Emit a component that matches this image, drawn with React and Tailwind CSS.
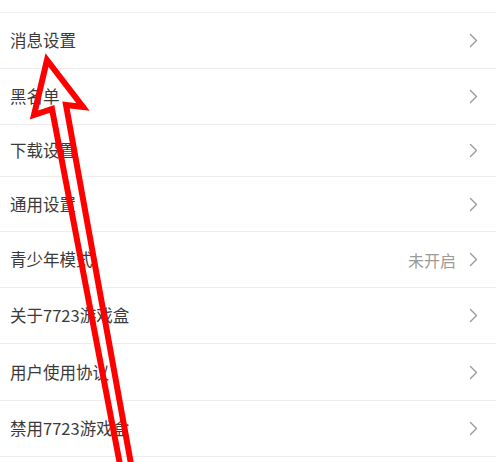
import React from "react";

const rows = [
  { label: "消息设置", h: "h-[56px]" },
  { label: "黑名单", h: "h-[56px]" },
  { label: "下载设置", h: "h-[52px]" },
  { label: "通用设置", h: "h-[55px]" },
  { label: "青少年模式", h: "h-[56px]", right: "未开启" },
  { label: "关于7723游戏盒", h: "h-[56px]" },
  { label: "用户使用协议", h: "h-[57px]" },
  { label: "禁用7723游戏盒", h: "h-[56px]" },
];

function Chevron() {
  return (
    <svg width="9" height="15" viewBox="0 0 9 15" className="shrink-0">
      <polyline points="1.5,1.5 7.5,7.5 1.5,13.5" fill="none" stroke="#9a9a9a" strokeWidth="1.4" strokeLinecap="round" strokeLinejoin="round" />
    </svg>
  );
}

export default function App() {
  return (
    <div
      className="relative w-[496px] h-[462px] overflow-hidden bg-white"
      style={{ fontFamily: '"Noto Sans CJK SC", "Noto Sans", sans-serif' }}
    >
      <div className="h-[13px] border-b border-[#f2f2f2]" />
      {rows.map((r, i) => (
        <div
          key={i}
          className={`${r.h} flex items-center justify-between pl-[10px] pr-[18px] border-b border-[#ececec]`}
        >
          <span className="text-[16.5px] text-[#3a3a3a] leading-none">{r.label}</span>
          <div className="flex items-center gap-[13px]">
            {r.right && <span className="text-[16px] text-[#9a9a9a] leading-none">{r.right}</span>}
            <Chevron />
          </div>
        </div>
      ))}
      <svg
        className="absolute inset-0 pointer-events-none"
        width="496"
        height="462"
        viewBox="0 0 496 462"
      >
        <polygon
          points="47,60 34,115 52,109 122,475 133,475 66,105 83,107"
          fill="none"
          stroke="#ff0000"
          strokeWidth="6"
          strokeLinejoin="miter"
          strokeMiterlimit="10"
        />
      </svg>
    </div>
  );
}
